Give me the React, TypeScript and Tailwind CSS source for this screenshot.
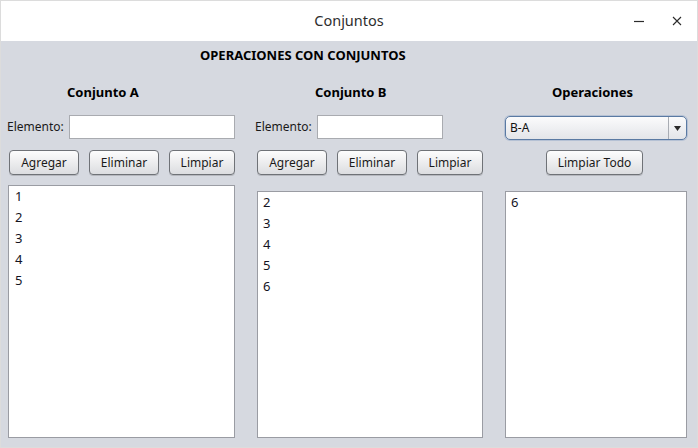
import React from "react";

const FONT = { fontFamily: '"Noto Sans", "Open Sans", sans-serif' };

function SwingButton({ label, width }: { label: string; width: string }) {
  return (
    <button
      className={`${width} h-[25px] shrink-0 rounded-[4px] border border-[#6f7277] bg-gradient-to-b from-[#fdfdfd] to-[#dcdde0] text-[12px] text-[#1a1a1a] shadow-[0_1px_0_rgba(0,0,0,0.15)]`}
    >
      {label}
    </button>
  );
}

function ListBox({ items, top, pad }: { items: string[]; top: string; pad: string }) {
  return (
    <div className={`${top} ${pad} flex-1 border border-[#9a9ca3] bg-white`}>
      {items.map((it) => (
        <div key={it} className="text-[13px] leading-[21px] text-[#14141f]">
          {it}
        </div>
      ))}
    </div>
  );
}

export default function App() {
  return (
    <div
      className="flex h-[448px] w-[698px] flex-col border border-[#dcdcdc] bg-white"
      style={FONT}
    >
      {/* Title bar */}
      <div className="relative flex h-[40px] shrink-0 items-center justify-center bg-white">
        <span className="text-[14.5px] text-[#2e2e2e]">Conjuntos</span>
        <div className="absolute right-[14px] top-0 flex h-full items-center gap-[26px]">
          <svg width="12" height="12" viewBox="0 0 12 12">
            <path d="M1 6.5h10" stroke="#2b2b2b" strokeWidth="1.2" />
          </svg>
          <svg width="12" height="12" viewBox="0 0 12 12">
            <path d="M2 2l8 8M10 2l-8 8" stroke="#2b2b2b" strokeWidth="1.1" />
          </svg>
        </div>
      </div>

      {/* Content */}
      <div className="flex flex-1 flex-col bg-[#d6d9e0] pl-[7px] pr-[10px]">
        <div className="pl-[192px] pt-[5px] text-[13px] font-bold leading-[18px] text-black">
          OPERACIONES CON CONJUNTOS
        </div>

        <div className="mt-[19px] flex flex-1 gap-[22px] pb-[9px]">
          {/* Conjunto A */}
          <div className="flex w-[227px] flex-col">
            <div className="pl-[59px] text-[13px] font-bold leading-[18px] text-black">Conjunto A</div>
            <div className="mt-[14px] flex h-[24px] items-center">
              <span className="-ml-[1px] text-[12px] text-[#1a1a1a]">Elemento:</span>
              <input className="ml-auto h-[24px] w-[166px] border border-[#a9abb0] bg-white outline-none" />
            </div>
            <div className="mt-[11px] flex gap-[10px] pl-[1px]">
              <SwingButton label="Agregar" width="w-[70px]" />
              <SwingButton label="Eliminar" width="w-[70px]" />
              <SwingButton label="Limpiar" width="w-[66px]" />
            </div>
            <ListBox items={["1", "2", "3", "4", "5"]} top="mt-[10px]" pad="pl-[6px]" />
          </div>

          {/* Conjunto B */}
          <div className="flex w-[226px] flex-col">
            <div className="pl-[58px] text-[13px] font-bold leading-[18px] text-black">Conjunto B</div>
            <div className="mt-[14px] flex h-[24px] items-center">
              <span className="-ml-[2px] text-[12px] text-[#1a1a1a]">Elemento:</span>
              <input className="ml-[5px] h-[24px] w-[126px] border border-[#a9abb0] bg-white outline-none" />
            </div>
            <div className="mt-[11px] flex gap-[10px]">
              <SwingButton label="Agregar" width="w-[70px]" />
              <SwingButton label="Eliminar" width="w-[70px]" />
              <SwingButton label="Limpiar" width="w-[66px]" />
            </div>
            <ListBox items={["2", "3", "4", "5", "6"]} top="mt-[16px]" pad="pl-[5px]" />
          </div>

          {/* Operaciones */}
          <div className="flex w-[182px] flex-col">
            <div className="pl-[47px] text-[13px] font-bold leading-[18px] text-black">Operaciones</div>
            <div className="mt-[15px] flex h-[24px] items-stretch overflow-hidden rounded-[5px] border border-[#5a7aa3] bg-gradient-to-b from-[#fbfbfc] to-[#e3e5e9] shadow-[0_0_0_1px_rgba(120,150,190,0.35)]">
              <span className="flex flex-1 items-center pl-[4px] text-[12px] text-[#111]">B-A</span>
              <div className="flex w-[18px] items-center justify-center border-l border-[#a8acb3]">
                <svg width="7" height="5" viewBox="0 0 7 5">
                  <path d="M0 0h7L3.5 5z" fill="#2a2a2a" />
                </svg>
              </div>
            </div>
            <div className="mt-[10px] flex justify-center pr-[3px]">
              <SwingButton label="Limpiar Todo" width="w-[97px]" />
            </div>
            <ListBox items={["6"]} top="mt-[16px]" pad="pl-[5px]" />
          </div>
        </div>
      </div>
    </div>
  );
}
